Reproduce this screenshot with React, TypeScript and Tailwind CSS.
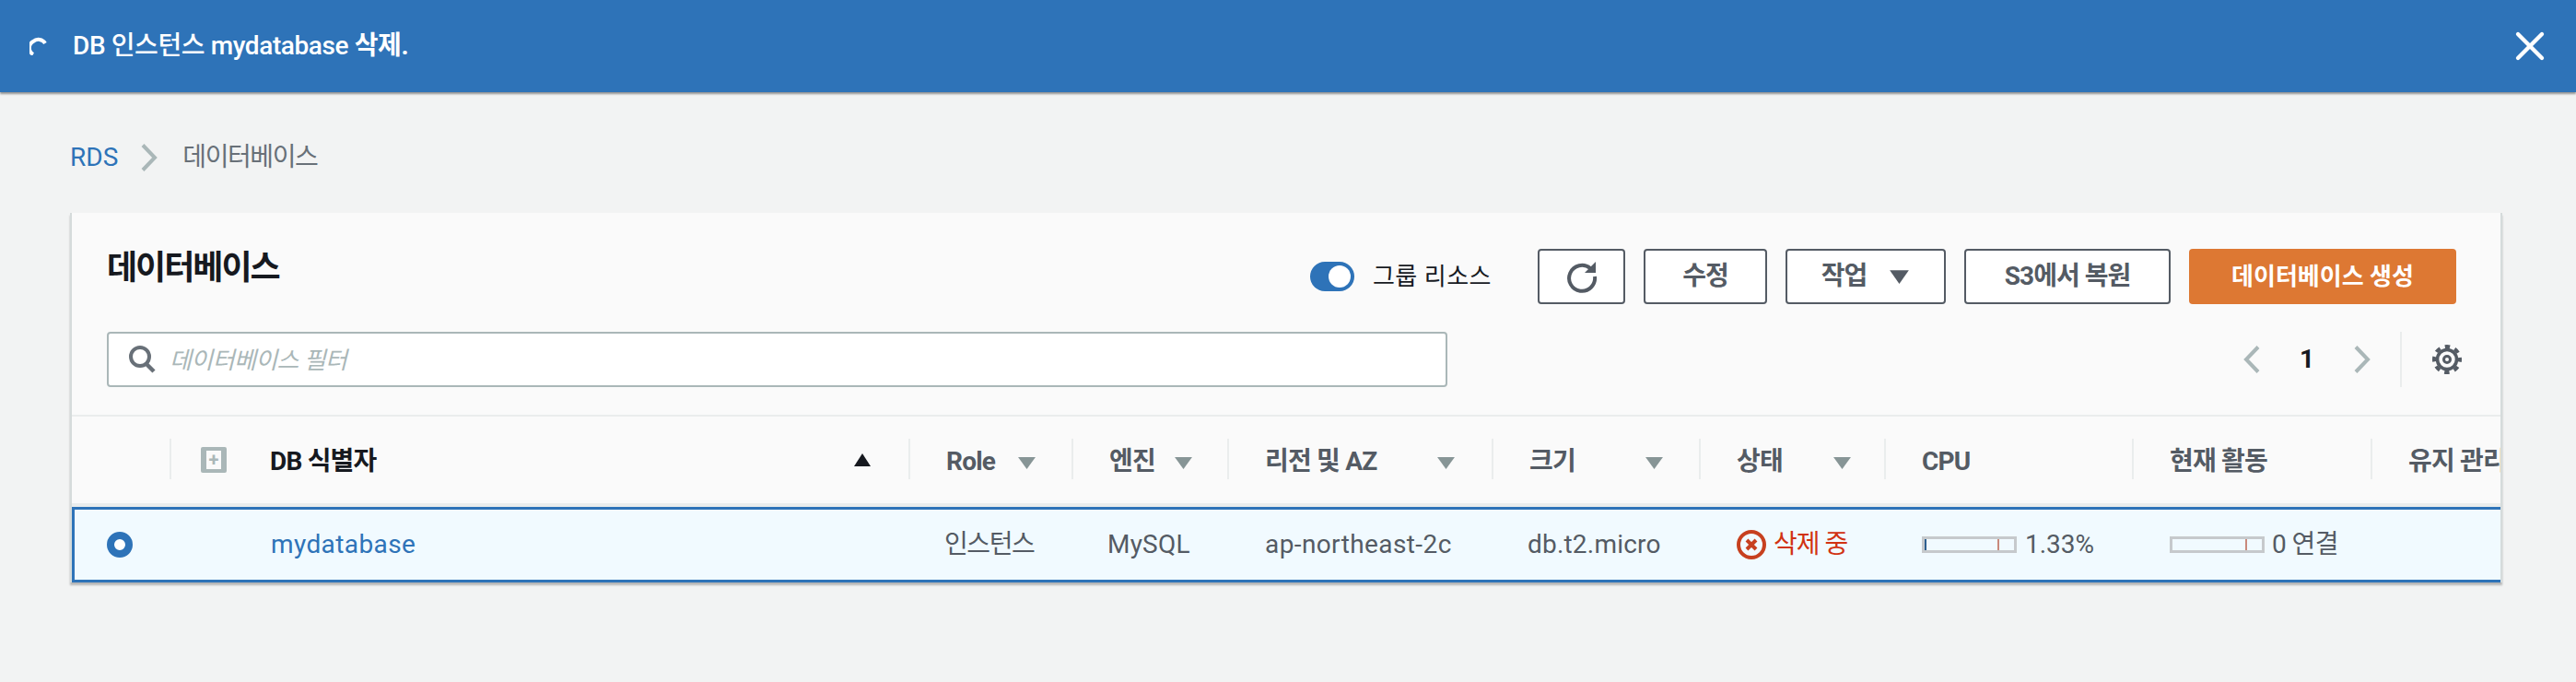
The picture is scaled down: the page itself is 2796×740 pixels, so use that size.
import { X } from 'lucide-react';

const FONT = "font-['Roboto','Noto_Sans_CJK_KR',sans-serif]";
const COLS = 'grid grid-cols-[106px_802px_177px_169px_287px_225px_201px_269px_259px_143px]';

const Spinner = () => (
  <svg width="20" height="20" viewBox="0 0 20 20" fill="none" className="shrink-0">
    <path d="M4 19 A8 8 0 0 1 4 5 A8.500 8.500 0 0 1 17 7" stroke="#fff" strokeWidth="4" />
  </svg>
);

const Refresh = () => (
  <svg width="36" height="36" viewBox="0 0 36 36" fill="none">
    <path d="M27 9 A14 14 0 1 0 32 18" stroke="#545b64" strokeWidth="4" />
    <path d="M33 2 V14 H21 Z" fill="#545b64" />
  </svg>
);

const Gear = () => (
  <svg width="32" height="32" viewBox="0 0 32 32" fill="none">
    <circle cx="16" cy="16" r="3.500" stroke="#545b64" strokeWidth="3" />
    <circle cx="16" cy="16" r="10.500" stroke="#545b64" strokeWidth="3.600" />
    <circle cx="16" cy="16" r="14" stroke="#545b64" strokeWidth="4" strokeDasharray="5.500 5.500" strokeDashoffset="2.750" />
  </svg>
);

const Search = () => (
  <svg width="32" height="32" viewBox="0 0 32 32" fill="none" className="shrink-0">
    <circle cx="14" cy="13" r="10" stroke="#687078" strokeWidth="4" />
    <path d="M20 20l9 9" stroke="#687078" strokeWidth="4.500" />
  </svg>
);

const Angle = ({ left, className = '' }: { left?: boolean; className?: string }) => (
  <svg width="18" height="30" viewBox="0 0 18 30" fill="none" className={`shrink-0 ${className}`}>
    <path d={left ? 'M16 1.500L3 15l13 13.500' : 'M2 1.500L15 15 2 28.500'} stroke="#aab7b8" strokeWidth="4" />
  </svg>
);

const Tri = ({ color = '#879596', left, w = 21, h = 14 }: { color?: string; left?: number; w?: number; h?: number }) => (
  <svg width={w} height={h} viewBox="0 0 20 14" preserveAspectRatio="none" className={left !== undefined ? 'absolute top-[43px]' : ''} style={{ left }}>
    <path d="M1 1h18l-9 13z" fill={color} />
  </svg>
);

const Btn = ({ children, w }: { children: React.ReactNode; w: string }) => (
  <button className={`${w} h-[60px] flex items-center justify-center gap-[24px] bg-white border-2 border-[#545b64] rounded-[4px] text-[#545b64] text-[28px] font-bold leading-none tracking-[-1px]`}>
    {children}
  </button>
);

const Meter = ({ value, mark }: { value?: boolean; mark: number }) => (
  <div className="relative w-[103px] h-[18px] border-[3px] border-[#c6c9cc] shrink-0">
    {value && <div className="absolute left-0 top-0 bottom-0 w-[2px] bg-[#2e5f8f]" />}
    <div className="absolute top-0 bottom-0 w-[2px] bg-[#c9897c]" style={{ left: mark }} />
  </div>
);

const Head = ({ label, filter }: { label: string; filter?: number }) => (
  <div className="relative flex items-center h-full">
    <div className="absolute left-0 top-[24px] bottom-[26px] w-[2px] bg-[#eaeded]" />
    <span className="ml-[41px] mt-[3px] text-[28px] font-bold whitespace-nowrap tracking-[-0.8px] text-[#545b64]">{label}</span>
    {filter !== undefined && <Tri left={filter} />}
  </div>
);

export default function App() {
  return (
    <div className={`${FONT} w-[2796px] h-[740px] bg-[#f2f3f3] overflow-hidden`}>
      <div className="h-[100px] bg-[#2e73b8] flex items-center justify-between pl-[32px] pr-[24px] shadow-[0_2px_2px_rgba(0,0,0,0.4)]">
        <div className="flex items-center gap-[27px] text-white text-[28px] font-medium tracking-[-0.4px]">
          <Spinner />
          <span>DB 인스턴스 mydatabase <span className="font-bold">삭제.</span></span>
        </div>
        <X size={52} strokeWidth={2} color="#fff" />
      </div>

      <div className="h-[131px] pt-[50px] pl-[76px] flex items-center text-[28px] leading-[40px] pb-[39px]">
        <span className="text-[#2e73b8]">RDS</span>
        <Angle className="ml-[25px] mr-[27px]" />
        <span className="text-[#687078] tracking-[-1.4px]">데이터베이스</span>
      </div>

      <div className="ml-[76px] w-[2640px] h-[401px] bg-[#fafafa] border-x-2 border-[#d5dbdb] overflow-hidden shadow-[0_3px_2px_rgba(0,0,0,0.25)]">
        <div className="h-[221px] border-b-2 border-[#eaeded] px-[38px]">
          <div className="flex items-start pt-[39px] h-[129px]">
            <h1 className="text-[36px] font-bold text-[#16191f] leading-[48px] -mt-[3px] tracking-[-2px]">데이터베이스</h1>
            <div className="ml-auto flex items-center gap-[20px] mr-[10px]">
              <div className="w-[48px] h-[32px] rounded-full bg-[#2e73b8] flex items-center justify-end pr-[4px]">
                <div className="w-[24px] h-[24px] rounded-full bg-white" />
              </div>
              <span className="text-[26px] text-[#16191f] mr-[30px] tracking-[0.5px]">그룹 리소스</span>
              <Btn w="w-[95px]"><Refresh /></Btn>
              <Btn w="w-[134px]">수정</Btn>
              <Btn w="w-[174px]">작업<Tri color="#545b64" w={23} h={16} /></Btn>
              <Btn w="w-[224px]">S3에서 복원</Btn>
              <button className="w-[290px] h-[60px] bg-[#dd7833] rounded-[4px] text-white text-[26px] font-bold">데이터베이스 생성</button>
            </div>
          </div>
          <div className="flex items-center h-[60px]">
            <div className="w-[1455px] h-[60px] flex items-center gap-[14px] pl-[20px] bg-white border-2 border-[#aab7b8] rounded-[4px]">
              <Search />
              <span className="text-[26px] italic text-[#aab7b8] tracking-[-0.6px] mt-[3px]">데이터베이스 필터</span>
            </div>
            <div className="ml-auto mr-[-34px] flex items-center h-[60px]">
              <Angle left />
              <span className="w-[102px] text-center text-[28px] font-bold text-[#16191f]">1</span>
              <Angle />
              <div className="ml-[32px] w-[2px] h-[60px] bg-[#eaeded]" />
              <div className="ml-[33px] mr-[38px]"><Gear /></div>
            </div>
          </div>
        </div>

        <div className={`${COLS} h-[98px] border-b-[4px] border-[#eaeded]`}>
          <div />
          <div className="relative flex items-center h-full">
            <div className="absolute left-0 top-[24px] bottom-[26px] w-[2px] bg-[#eaeded]" />
            <div className="ml-[34px] w-[28px] h-[28px] bg-[#aab7b8] rounded-[2px] flex items-center justify-center">
              <div className="w-[16px] h-[20px] bg-[#fafafa] flex items-center justify-center text-[#aab7b8] text-[20px] font-bold leading-none">+</div>
            </div>
            <span className="ml-[47px] mt-[3px] text-[28px] font-bold text-[#16191f] tracking-[-0.8px]">DB 식별자</span>
            <svg width="20" height="14" viewBox="0 0 20 14" className="absolute left-[742px] top-[40px]">
              <path d="M10 0l9 14H1z" fill="#16191f" />
            </svg>
          </div>
          <Head label="Role" filter={118} />
          <Head label="엔진" filter={111} />
          <Head label="리전 및 AZ" filter={227} />
          <Head label="크기" filter={166} />
          <Head label="상태" filter={145} />
          <Head label="CPU" />
          <Head label="현재 활동" />
          <Head label="유지 관리" />
        </div>

        <div className={`${COLS} h-[82px] bg-[#f1faff] border-y-[3px] border-[#2e73b8] shadow-[inset_3px_0_0_#2e73b8] text-[28px] text-[#545b64] items-center`}>
          <div className="pl-[38px]">
            <div className="w-[28px] h-[28px] rounded-full border-[8px] border-[#2e73b8] bg-white" />
          </div>
          <div className="pl-[110px] text-[#2e73b8] tracking-[0.4px]">mydatabase</div>
          <div className="pl-[39px] tracking-[-1.4px]">인스턴스</div>
          <div className="pl-[39px] tracking-[0.2px]">MySQL</div>
          <div className="pl-[41px] tracking-[0.4px]">ap-northeast-2c</div>
          <div className="pl-[39px] tracking-[0.2px]">db.t2.micro</div>
          <div className="pl-[41px] flex items-center gap-[8px] text-[#d13212] tracking-[-1px]">
            <svg width="32" height="32" viewBox="0 0 32 32" fill="none" className="shrink-0">
              <circle cx="16" cy="16" r="14" stroke="#c7401f" strokeWidth="4" />
              <path d="M11 11l10 10M21 11L11 21" stroke="#c7401f" strokeWidth="4" />
            </svg>
            <span>삭제 중</span>
          </div>
          <div className="pl-[41px] flex items-center gap-[9px]"><Meter value mark={79} /><span>1.33%</span></div>
          <div className="pl-[41px] flex items-center gap-[8px]"><Meter mark={79} /><span className="tracking-[-0.6px]">0 연결</span></div>
          <div />
        </div>
      </div>
    </div>
  );
}
